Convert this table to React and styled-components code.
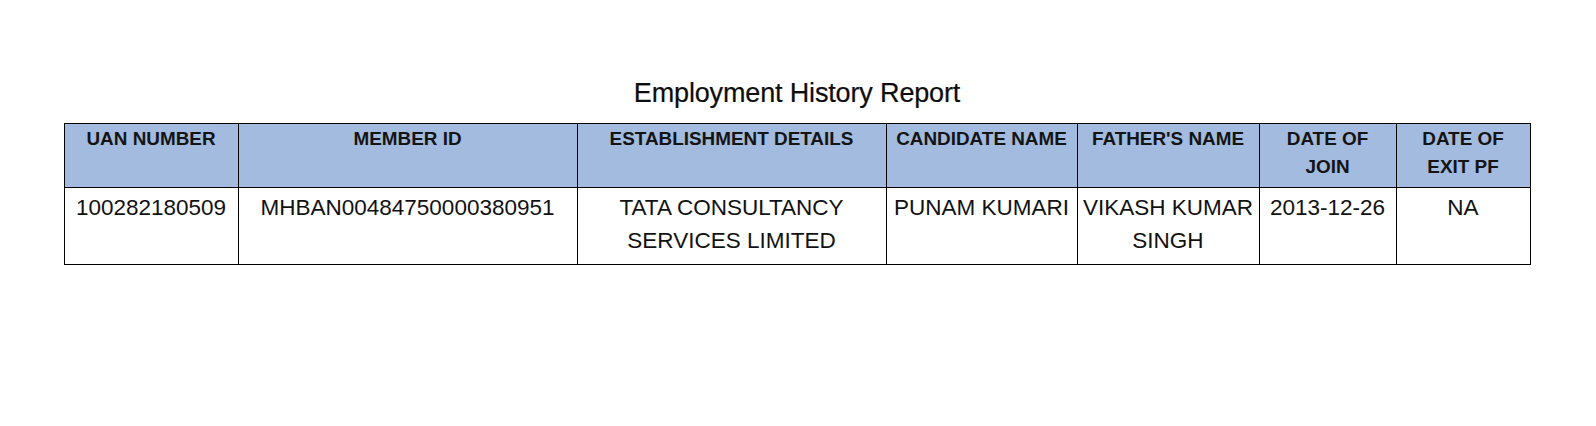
import React from "react";
import styled, { createGlobalStyle } from "styled-components";

const GlobalStyle = createGlobalStyle`
  html, body {
    margin: 0;
    padding: 0;
    background: #ffffff;
  }
  body {
    font-family: "Liberation Sans", Arial, sans-serif;
    color: #111111;
  }
`;

const Page = styled.div`
  width: 1596px;
  min-height: 426px;
  box-sizing: border-box;
  padding: 78px 0 0 64px;
`;

const Report = styled.section`
  width: 1466px;
  display: flex;
  flex-direction: column;
  align-items: center;
`;

const Title = styled.h1`
  margin: 0 0 15px;
  font-family: "Liberation Sans", Arial, sans-serif;
  font-weight: 400;
  font-size: 27px;
  line-height: 30px;
  color: #0d0d0d;
  letter-spacing: -0.15px;
  -webkit-text-stroke: 0.2px #0d0d0d;
`;

const Table = styled.table`
  width: 1466px;
  table-layout: fixed;
  border-collapse: collapse;
`;

const HeadCell = styled.th`
  background: #a2bbde;
  border: 1px solid #000000;
  font-weight: 700;
  font-size: 18.9px;
  line-height: 27.5px;
  padding: 1px 2px 6px;
  height: 56px;
  vertical-align: top;
  text-align: center;
  color: #141414;
  box-sizing: content-box;
`;

const BodyCell = styled.td`
  border: 1px solid #000000;
  font-size: 22.5px;
  line-height: 32.5px;
  padding: 4px 1px 6px;
  height: 66px;
  vertical-align: top;
  text-align: center;
  color: #111111;
  box-sizing: content-box;
`;

const columns = [
  { key: "uan", label: ["UAN NUMBER"], width: 174 },
  { key: "member", label: ["MEMBER ID"], width: 339 },
  { key: "est", label: ["ESTABLISHMENT DETAILS"], width: 309 },
  { key: "cand", label: ["CANDIDATE NAME"], width: 191 },
  { key: "father", label: ["FATHER'S NAME"], width: 182 },
  { key: "doj", label: ["DATE OF", "JOIN"], width: 137 },
  { key: "doe", label: ["DATE OF", "EXIT PF"], width: 134 },
];

const rows = [
  {
    uan: "100282180509",
    member: "MHBAN00484750000380951",
    est: "TATA CONSULTANCY SERVICES LIMITED",
    cand: "PUNAM KUMARI",
    father: "VIKASH KUMAR SINGH",
    doj: "2013-12-26",
    doe: "NA",
  },
];

export default function App() {
  return (
    <>
      <GlobalStyle />
      <Page>
        <Report>
          <Title>Employment History Report</Title>
          <Table>
            <colgroup>
              {columns.map((c) => (
                <col key={c.key} style={{ width: c.width }} />
              ))}
            </colgroup>
            <thead>
              <tr>
                {columns.map((c) => (
                  <HeadCell key={c.key}>
                    {c.label.map((line, i) => (
                      <React.Fragment key={i}>
                        {i > 0 && <br />}
                        {line}
                      </React.Fragment>
                    ))}
                  </HeadCell>
                ))}
              </tr>
            </thead>
            <tbody>
              {rows.map((r, ri) => (
                <tr key={ri}>
                  {columns.map((c) => (
                    <BodyCell key={c.key}>{r[c.key]}</BodyCell>
                  ))}
                </tr>
              ))}
            </tbody>
          </Table>
        </Report>
      </Page>
    </>
  );
}
